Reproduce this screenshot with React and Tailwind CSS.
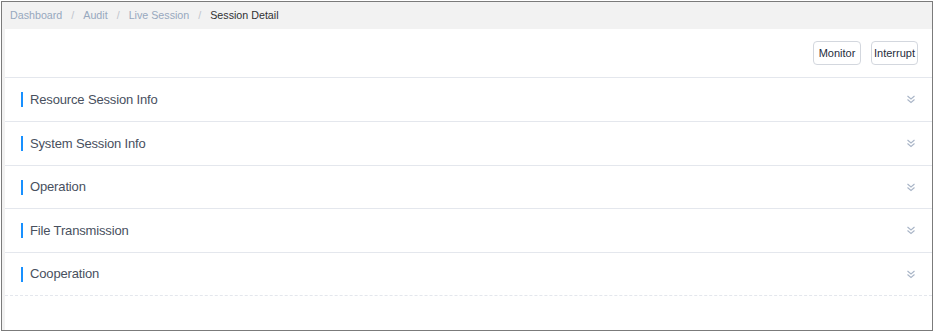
import React from 'react';

const sections = [
  { title: 'Resource Session Info', h: 'h-[44px]' },
  { title: 'System Session Info', h: 'h-[44px]' },
  { title: 'Operation', h: 'h-[43px]' },
  { title: 'File Transmission', h: 'h-[44px]' },
  { title: 'Cooperation', h: 'h-[43px]', last: true },
];

const crumbs = ['Dashboard', 'Audit', 'Live Session'];

function DoubleChevron() {
  return (
    <svg width="10" height="9" viewBox="0 0 10 9" fill="none" stroke="#a9b5c7" strokeWidth="1.1">
      <path d="M1.5 1l3.5 3 3.5-3" />
      <path d="M1.5 4.5l3.5 3 3.5-3" />
    </svg>
  );
}

export default function App() {
  return (
    <div className="w-[934px] h-[332px] bg-white p-px font-['Liberation_Sans',Arial,sans-serif]">
      <div className="h-full flex flex-col border border-[#7b7b7b] bg-[#f2f2f2]">
        <div className="h-[27px] shrink-0 flex items-center pl-[8px] text-[10.7px]">
          {crumbs.map((c) => (
            <React.Fragment key={c}>
              <span className="text-[#97a8be]">{c}</span>
              <span className="mx-[9px] text-[#c0c4cc]">/</span>
            </React.Fragment>
          ))}
          <span className="text-[#303133]">Session Detail</span>
        </div>
        <div className="flex-1 ml-[3px] bg-white">
          <div className="h-[49px] flex items-center justify-end gap-[10px] pr-[14px] border-b border-[#e4e7ed]">
            <button className="w-[48px] h-[24px] rounded-[4px] border border-[#d3d7de] bg-white text-[11px] text-[#1f2d3d]">
              Monitor
            </button>
            <button className="w-[47px] h-[24px] rounded-[4px] border border-[#d3d7de] bg-white text-[11px] text-[#1f2d3d]">
              Interrupt
            </button>
          </div>
          {sections.map((s) => (
            <div
              key={s.title}
              className={`${s.h} flex items-center justify-between pl-[16px] pr-[16px] border-b ${
                s.last ? 'border-dashed border-[#e4e7ed]' : 'border-[#e4e7ed]'
              }`}
            >
              <div className="flex items-center">
                <span className="w-[2px] h-[15px] bg-[#1890ff] mr-[7px]" />
                <span className="text-[13px] tracking-[-0.15px] text-[#48505e]">{s.title}</span>
              </div>
              <DoubleChevron />
            </div>
          ))}
        </div>
      </div>
    </div>
  );
}
